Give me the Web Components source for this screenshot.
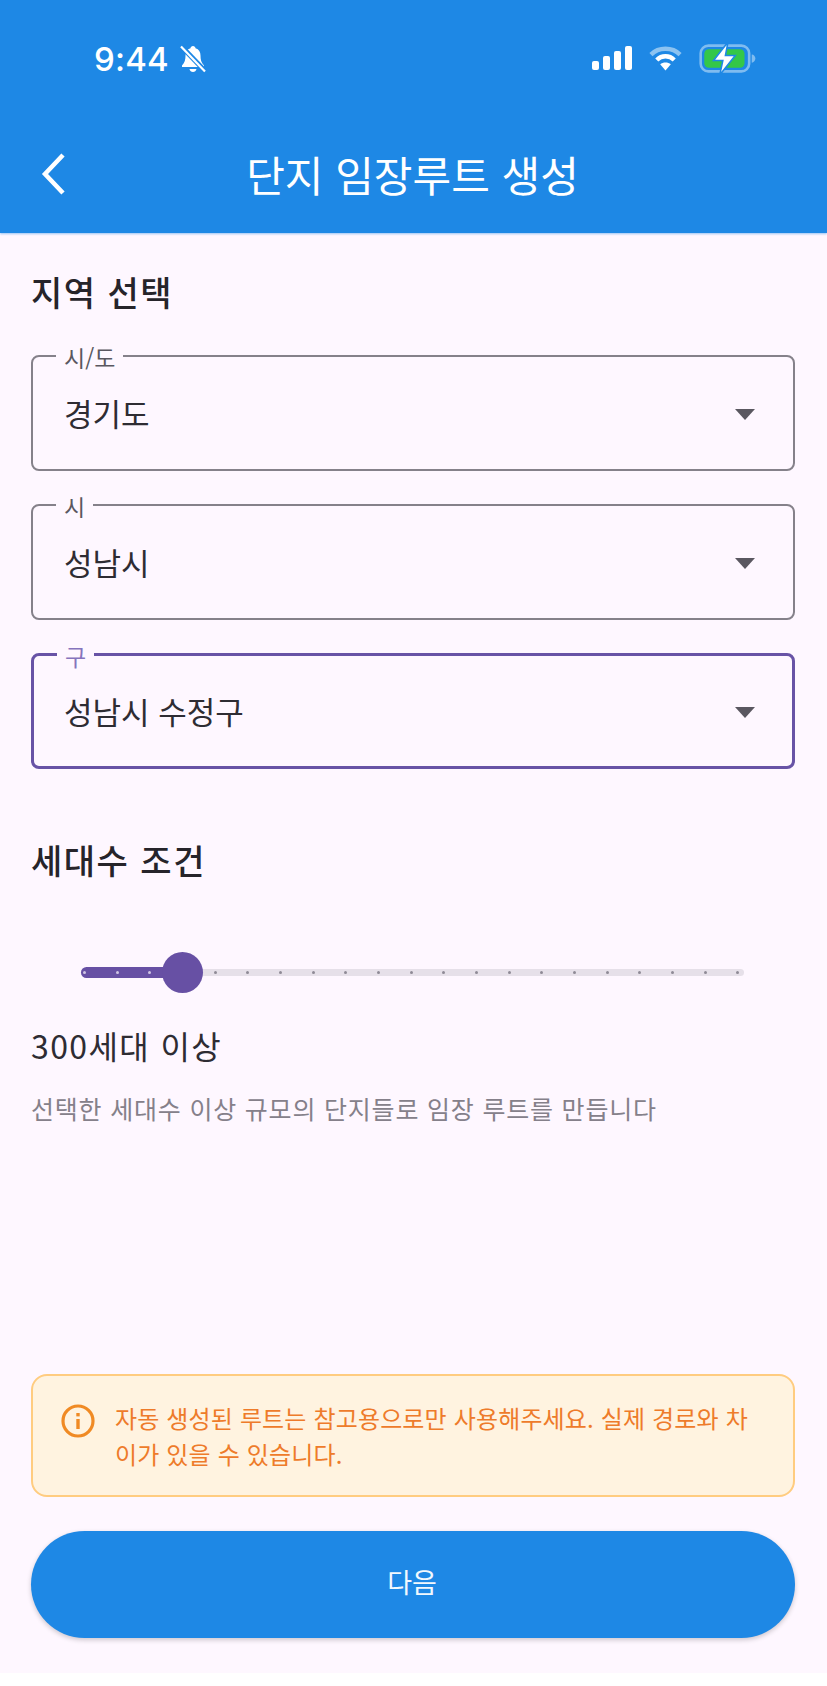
<!DOCTYPE html>
<html lang="ko">
<head>
<meta charset="utf-8">
<title>단지 임장루트 생성</title>
<style>
  html, body { margin: 0; padding: 0; }
  body {
    width: 827px;
    height: 1686px;
    overflow: hidden;
    background: #fef7ff;
    font-family: "Noto Sans CJK KR", "Noto Sans", sans-serif;
  }
  select-field + select-field { margin-top: 33px; }
</style>
</head>
<body>
<route-page>
  <app-bar slot="top" title="단지 임장루트 생성"></app-bar>
  <section-title>지역 선택</section-title>
  <select-field label="시/도" value="경기도"></select-field>
  <select-field label="시" value="성남시"></select-field>
  <select-field label="구" value="성남시 수정구" focused></select-field>
  <section-title class="second">세대수 조건</section-title>
  <unit-slider divisions="20" value="3" caption="300세대 이상" hint="선택한 세대수 이상 규모의 단지들로 임장 루트를 만듭니다"></unit-slider>
  <info-banner slot="bottom">자동 생성된 루트는 참고용으로만 사용해주세요. 실제 경로와 차이가 있을 수 있습니다.</info-banner>
  <primary-button slot="bottom">다음</primary-button>
</route-page>

<script>
class RoutePage extends HTMLElement {
    constructor() {
        super();
        this.attachShadow({ mode: 'open' });
        this.shadowRoot.innerHTML = `
      <style>
        :host { display: flex; flex-direction: column; height: 1686px; }
        main { display: flex; flex-direction: column; flex: 1; padding: 33px 32px 35px 31px; }
        .bottom { margin-top: auto; display: flex; flex-direction: column; gap: 34px; }
        .foot { height: 13px; background: #fff; }
        ::slotted(.second) { margin-top: 65px; }
      </style>
      <slot name="top"></slot>
      <main>
        <slot></slot>
        <div class="bottom"><slot name="bottom"></slot></div>
      </main>
      <div class="foot"></div>
    `;
    }
}

class AppBar extends HTMLElement {
    constructor() {
        super();
        this.attachShadow({ mode: 'open' });
        this.shadowRoot.innerHTML = `
      <style>
        :host {
          display: block; background: #1e88e5; color: #fff; height: 233px; box-sizing: border-box;
          box-shadow: 0 1px 2px rgba(30,136,229,.45);
        }
        .status { display: flex; align-items: center; justify-content: space-between; height: 58px; padding: 29px 70px 0 94px; }
        .time { display: flex; align-items: center; gap: 10px; margin-top: 1px; font: 500 33px/58px Inter, Roboto, sans-serif; letter-spacing: .2px; }
        .right { display: flex; align-items: center; gap: 17px; }
        .bar { position: relative; display: flex; align-items: center; justify-content: center; height: 87px; margin-top: 43px; padding-right: 2px; }
        .back { position: absolute; left: 38px; top: 22px; }
        h1 { margin: 0; font-weight: 400; font-size: 42px; letter-spacing: 0; }
      </style>
      <div class="status">
        <div class="time">9:44
          <svg width="28" height="30" viewBox="0 0 28 30">
            <path d="M14 2c-1.500 0-2.300 1-2.500 2.200C8 5.300 6.500 8 6.500 11.500c0 4-.7 7-3.500 10v1.500h22v-1.500c-2.800-3-3.500-6-3.500-10 0-3.500-1.500-6.200-5-7.300C16.300 3 15.500 2 14 2z" fill="#fff"/>
            <path d="M10.500 25h7c-.3 1.800-1.800 3-3.500 3s-3.200-1.200-3.500-3z" fill="#fff"/>
            <path d="M3 3l23 24" stroke="#1e88e5" stroke-width="5"/>
            <path d="M2 2.500l24 25" stroke="#fff" stroke-width="2.200"/>
          </svg>
        </div>
        <div class="right">
          <svg width="40" height="24" viewBox="0 0 40 24" fill="#fff">
            <rect x="0" y="15" width="7" height="9" rx="2"/>
            <rect x="11" y="10" width="7" height="14" rx="2"/>
            <rect x="22" y="5" width="7" height="19" rx="2"/>
            <rect x="33" y="0" width="7" height="24" rx="2"/>
          </svg>
          <svg width="33" height="26" viewBox="0 0 34 26" fill="none">
            <path d="M2 9.500C10 1.500 24 1.500 32 9.500" stroke="#8cc3f1" stroke-width="4.500"/>
            <path d="M8 15c5-5 13-5 18 0" stroke="#fff" stroke-width="4.500"/>
            <path d="M17 26l-5.500-6.500c3-2.600 8-2.600 11 0z" fill="#fff"/>
          </svg>
          <svg width="58" height="33" viewBox="0 0 56 32">
            <rect x="1.500" y="3.500" width="47" height="25" rx="7.500" fill="none" stroke="#7fbcf0" stroke-width="2.500"/>
            <rect x="5" y="7" width="39" height="18" rx="4.500" fill="#34c748"/>
            <path d="M51 12v8c2 0 3.500-2 3.500-4s-1.500-4-3.500-4z" fill="#7fbcf0"/>
            <path d="M28 0L14 18h9l-3 14 15-19h-9.500z" fill="#fff" stroke="#1e88e5" stroke-width="1.500"/>
          </svg>
        </div>
      </div>
      <div class="bar">
        <svg class="back" width="32" height="44" viewBox="0 0 32 44" fill="none">
          <path d="M25 3L7 22l18 19" stroke="#fff" stroke-width="4.500"/>
        </svg>
        <h1>${this.getAttribute('title')}</h1>
      </div>
    `;
    }
}

class SectionTitle extends HTMLElement {
    constructor() {
        super();
        this.attachShadow({ mode: 'open' });
        this.shadowRoot.innerHTML = `
      <style>
        :host { display: block; font-size: 34px; font-weight: 500; line-height: 52px; color: #26242a; letter-spacing: 1.500px; }
      </style>
      <slot></slot>
    `;
    }
}

class SelectField extends HTMLElement {
    constructor() {
        super();
        this.attachShadow({ mode: 'open' });
        this.shadowRoot.innerHTML = `
      <style>
        :host { display: block; margin-top: 37px; --line: #85818a; --label: #5a5760; }
        :host([focused]) { --line: #6853a6; --label: #8674bd; }
        :host([focused]) .box { border-width: 3px; padding: 0 37px 0 30px; }
        .box {
          position: relative; display: flex; align-items: center; justify-content: space-between;
          height: 116px; box-sizing: border-box; padding: 0 38px 0 31px;
          border: 2px solid var(--line); border-radius: 8px;
        }
        label {
          position: absolute; left: 23px; top: -15px; padding: 0 8px;
          background: #fef7ff; font-size: 23px; line-height: 30px; color: var(--label);
        }
        .value { font-size: 31px; line-height: 44px; color: #2e2c33; }
        .arrow { width: 0; height: 0; margin-top: 2px; border: 10px solid transparent; border-top: 11px solid #5a5760; border-bottom: 0; }
      </style>
      <div class="box">
        <label>${this.getAttribute('label')}</label>
        <span class="value">${this.getAttribute('value')}</span>
        <span class="arrow"></span>
      </div>
    `;
    }
}

class UnitSlider extends HTMLElement {
    constructor() {
        super();
        this.attachShadow({ mode: 'open' });
        const divisions = Number(this.getAttribute('divisions'));
        const value = Number(this.getAttribute('value'));
        let ticks = '';
        for (let i = 0; i <= divisions; i++) {
            ticks += `<i class="${i <= value ? 'on' : ''}"></i>`;
        }
        const ratio = value / divisions;
        this.shadowRoot.innerHTML = `
      <style>
        :host { display: block; }
        .slider { position: relative; height: 7px; margin: 83px 51px 0 50px; background: #e6e0e9; border-radius: 4px; }
        .fill { position: absolute; left: 0; top: -2px; bottom: -2px; width: calc(3.500px + (100% - 10px) * ${ratio}); background: #6750a4; border-radius: 6px; }
        .ticks { position: absolute; inset: 0; display: flex; justify-content: space-between; align-items: center; padding: 0 4.500px 0 2px; }
        .ticks i { width: 3px; height: 3px; border-radius: 50%; background: #8f8a96; }
        .ticks i.on { background: #cfc5e4; }
        .thumb { position: absolute; left: calc(3.500px + (100% - 10px) * ${ratio}); top: 50%; width: 41px; height: 41px; margin: -20.500px 0 0 -20.500px; border-radius: 50%; background: #6750a4; }
        .caption { margin-top: 45px; font-size: 32px; line-height: 48px; color: #2e2c33; letter-spacing: 1.400px; }
        .hint { margin-top: 20px; font-size: 25px; line-height: 38px; color: #85808a; letter-spacing: .8px; }
      </style>
      <div class="slider">
        <div class="fill"></div>
        <div class="ticks">${ticks}</div>
        <div class="thumb"></div>
      </div>
      <div class="caption">${this.getAttribute('caption')}</div>
      <div class="hint">${this.getAttribute('hint')}</div>
    `;
    }
}

class InfoBanner extends HTMLElement {
    constructor() {
        super();
        this.attachShadow({ mode: 'open' });
        this.shadowRoot.innerHTML = `
      <style>
        :host {
          display: flex; gap: 20px; align-items: flex-start; box-sizing: border-box;
          height: 123px; padding: 24px 38px 0 28px;
          background: #fff3e0; border: 2px solid #ffcc80; border-radius: 16px;
          font-size: 24px; line-height: 36px; color: #ee7b2a; letter-spacing: .15px;
        }
        svg { flex: none; margin-top: 4px; }
      </style>
      <svg width="34" height="34" viewBox="0 0 34 34" fill="none">
        <circle cx="17" cy="17" r="15" stroke="#f08a24" stroke-width="3.200"/>
        <rect x="15.300" y="15" width="3.400" height="10" fill="#f08a24"/>
        <rect x="15.300" y="9" width="3.400" height="3.400" fill="#f08a24"/>
      </svg>
      <div><slot></slot></div>
    `;
    }
}

class PrimaryButton extends HTMLElement {
    constructor() {
        super();
        this.attachShadow({ mode: 'open' });
        this.shadowRoot.innerHTML = `
      <style>
        :host {
          display: flex; align-items: center; justify-content: center; height: 101px; padding: 0 2px 6px 0;
          background: #1e88e5; color: #f2f8fe; border-radius: 54px; font-size: 27px;
          box-shadow: 0 2px 5px rgba(0,0,0,.2);
        }
      </style>
      <slot></slot>
    `;
    }
}

customElements.define('route-page', RoutePage);
customElements.define('app-bar', AppBar);
customElements.define('section-title', SectionTitle);
customElements.define('select-field', SelectField);
customElements.define('unit-slider', UnitSlider);
customElements.define('info-banner', InfoBanner);
customElements.define('primary-button', PrimaryButton);
</script>
</body>
</html>
